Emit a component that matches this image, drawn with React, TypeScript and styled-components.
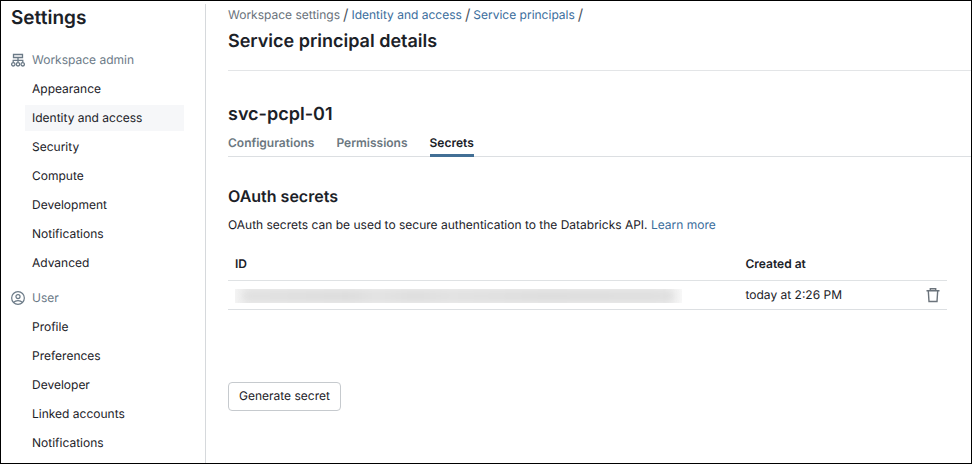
import React from "react";
import styled, { createGlobalStyle } from "styled-components";

const GlobalStyle = createGlobalStyle`
  *, *::before, *::after { box-sizing: border-box; }
  body {
    margin: 0;
    background: #fff;
    color: #1b2127;
    font: 400 12px/16px Inter, "Liberation Sans", sans-serif;
    text-rendering: geometricPrecision;
  }
  h1, h2, h3, p, ul, ol { margin: 0; padding: 0; }
  ul, ol { list-style: none; }
  button { font: inherit; color: inherit; text-rendering: inherit; }
`;

const Page = styled.div`
  display: flex;
  min-height: 100vh;
  border: 1px solid #000;
`;

const Sidebar = styled.nav`
  flex: none;
  width: 205px;
  margin-top: 3px;
  padding: 1px 21px 0 10px;
  border-right: 1px solid #d6d9dc;
`;

const SidebarTitle = styled.h1`
  font-size: 19px;
  line-height: 26px;
  font-weight: 600;
  margin-bottom: 16px;
`;

const Section = styled.section`
  margin-bottom: 9px;

  &:last-child {
    margin-bottom: 0;
  }
`;

const SectionHeading = styled.h2`
  display: flex;
  align-items: center;
  gap: 7px;
  height: 26px;
  margin-bottom: 3px;
  font-size: 12px;
  font-weight: 400;
  color: #6b7a87;
`;

const NavList = styled.ul`
  display: grid;
  gap: 3px;
  padding-left: 14px;
`;

const NavLink = styled.a<{ $active?: boolean }>`
  display: block;
  padding: 5px 7px;
  color: #1b2127;
  text-decoration: none;
  background: ${(p) => (p.$active ? "#f6f7f9" : "transparent")};
`;

const Main = styled.main`
  flex: 1;
  min-width: 0;
  padding: 5px 0 24px 22px;
`;

const Breadcrumbs = styled.ol`
  display: flex;
  line-height: 17px;
  color: #68717a;
`;

const Crumb = styled.li`
  display: flex;
  align-items: center;

  &::after {
    content: "/";
    margin: 0 3px;
    font-size: 15px;
    color: #4c555e;
  }
`;

const Link = styled.a`
  color: #3a6d9c;
  text-decoration: none;
`;

const PageTitle = styled.h2`
  padding: 6px 0 15px;
  border-bottom: 1px solid #e3e5e7;
  font-size: 18px;
  line-height: 26px;
  font-weight: 600;
`;

const PrincipalName = styled.h2`
  margin-top: 31px;
  font-size: 18px;
  line-height: 26px;
  font-weight: 600;
`;

const TabList = styled.div`
  display: flex;
  gap: 22px;
  margin-top: 4px;
  border-bottom: 1px solid #dcdfe2;
`;

const Tab = styled.button<{ $active?: boolean }>`
  padding: 3px 0;
  margin-bottom: -1px;
  border: 0;
  border-bottom: 3px solid ${(p) => (p.$active ? "#426f95" : "transparent")};
  background: none;
  font-weight: 600;
  color: ${(p) => (p.$active ? "#1b2127" : "#6b7780")};
`;

const Panel = styled.section`
  padding: 27px 24px 0 0;
`;

const PanelTitle = styled.h3`
  font-size: 16px;
  line-height: 24px;
  font-weight: 600;
`;

const Description = styled.p`
  margin-top: 9px;
`;

const Table = styled.table`
  width: 100%;
  margin-top: 15px;
  table-layout: fixed;
  border-collapse: collapse;
  text-align: left;
`;

const HeaderCell = styled.th<{ $width?: string }>`
  width: ${(p) => p.$width ?? "auto"};
  height: 32px;
  padding: 0 7px;
  border-bottom: 1px solid #dfe2e4;
  font-weight: 600;
`;

const Cell = styled.td`
  height: 29px;
  padding: 0 7px;
  border-bottom: 1px solid #dcdfe2;
`;

const ActionCell = styled(Cell)`
  text-align: right;
`;

const Redacted = styled.div`
  width: 90%;
  height: 14px;
  margin-top: 2px;
  overflow: hidden;
  background: linear-gradient(90deg, #f4f4f4, #ececec 3%, #ececec 96%, #f8f8f8);

  &::before {
    content: "";
    display: block;
    height: 10px;
    margin: 2px 8px;
    background: linear-gradient(90deg, #dedede, #d8d8d8 25%, #e0e0e0 31%, #d9d9d9 40%, #dfdfdf 48%, #d9d9d9 70%, #dcdcdc);
    filter: blur(4px);
  }
`;

const IconButton = styled.button`
  display: inline-flex;
  padding: 0;
  border: 0;
  background: none;
  color: #6b737b;
  vertical-align: middle;
`;

const GenerateButton = styled.button`
  height: 29px;
  margin-top: 72px;
  padding: 0 10px;
  border: 1px solid #c6cace;
  border-radius: 4px;
  background: #fff;
`;

const Icon = styled.svg`
  display: block;
  flex: none;
  fill: none;
  stroke: currentColor;
`;

const WorkspaceIcon = () => (
  <Icon width="14" height="15" viewBox="0 0 14 15" strokeWidth="1.3" aria-hidden="true">
    <path d="M2.5 1.5h9v3h-9zM7 4.5v5M2.2 9.5V7.3h9.6v2.2" />
    <circle cx="2.3" cy="11.3" r="1.7" />
    <circle cx="7" cy="11.3" r="1.7" />
    <circle cx="11.7" cy="11.3" r="1.7" />
  </Icon>
);

const UserIcon = () => (
  <Icon width="14" height="14" viewBox="0 0 15 15" strokeWidth="1.3" aria-hidden="true">
    <circle cx="7.5" cy="7.5" r="6.8" />
    <circle cx="7.5" cy="6" r="2.2" />
    <path d="M2.8 12.2c1.2-1.4 2.8-2 4.7-2s3.5.6 4.7 2" />
  </Icon>
);

const TrashIcon = () => (
  <Icon width="14" height="16" viewBox="0 0 14 16" strokeWidth="1.4" aria-hidden="true">
    <path d="M.5 3.8h13M4.3 3.8V1.7h5.4v2.1M2.3 3.8l.7 10.7h8l.7-10.7" />
  </Icon>
);

const sections = [
  {
    title: "Workspace admin",
    icon: <WorkspaceIcon />,
    items: [
      "Appearance",
      "Identity and access",
      "Security",
      "Compute",
      "Development",
      "Notifications",
      "Advanced",
    ],
  },
  {
    title: "User",
    icon: <UserIcon />,
    items: ["Profile", "Preferences", "Developer", "Linked accounts", "Notifications"],
  },
];

const tabs = ["Configurations", "Permissions", "Secrets"];

export default function App() {
  return (
    <>
      <GlobalStyle />
      <Page>
        <Sidebar aria-label="Settings">
          <SidebarTitle>Settings</SidebarTitle>
          {sections.map((section) => (
            <Section key={section.title}>
              <SectionHeading>
                {section.icon}
                {section.title}
              </SectionHeading>
              <NavList>
                {section.items.map((item) => (
                  <li key={item}>
                    <NavLink href="#" $active={item === "Identity and access"}>
                      {item}
                    </NavLink>
                  </li>
                ))}
              </NavList>
            </Section>
          ))}
        </Sidebar>
        <Main>
          <Breadcrumbs>
            <Crumb>Workspace settings</Crumb>
            <Crumb>
              <Link href="#">Identity and access</Link>
            </Crumb>
            <Crumb>
              <Link href="#">Service principals</Link>
            </Crumb>
          </Breadcrumbs>
          <PageTitle>Service principal details</PageTitle>
          <PrincipalName>svc-pcpl-01</PrincipalName>
          <TabList role="tablist">
            {tabs.map((tab) => (
              <Tab key={tab} role="tab" aria-selected={tab === "Secrets"} $active={tab === "Secrets"}>
                {tab}
              </Tab>
            ))}
          </TabList>
          <Panel role="tabpanel">
            <PanelTitle>OAuth secrets</PanelTitle>
            <Description>
              OAuth secrets can be used to secure authentication to the Databricks API.{" "}
              <Link href="#">Learn more</Link>
            </Description>
            <Table>
              <thead>
                <tr>
                  <HeaderCell scope="col">ID</HeaderCell>
                  <HeaderCell scope="col" $width="22%">
                    Created at
                  </HeaderCell>
                  <HeaderCell as="td" $width="7%" />
                </tr>
              </thead>
              <tbody>
                <tr>
                  <Cell>
                    <Redacted aria-label="Hidden ID" />
                  </Cell>
                  <Cell>today at 2:26 PM</Cell>
                  <ActionCell>
                    <IconButton aria-label="Delete secret">
                      <TrashIcon />
                    </IconButton>
                  </ActionCell>
                </tr>
              </tbody>
            </Table>
            <GenerateButton>Generate secret</GenerateButton>
          </Panel>
        </Main>
      </Page>
    </>
  );
}
